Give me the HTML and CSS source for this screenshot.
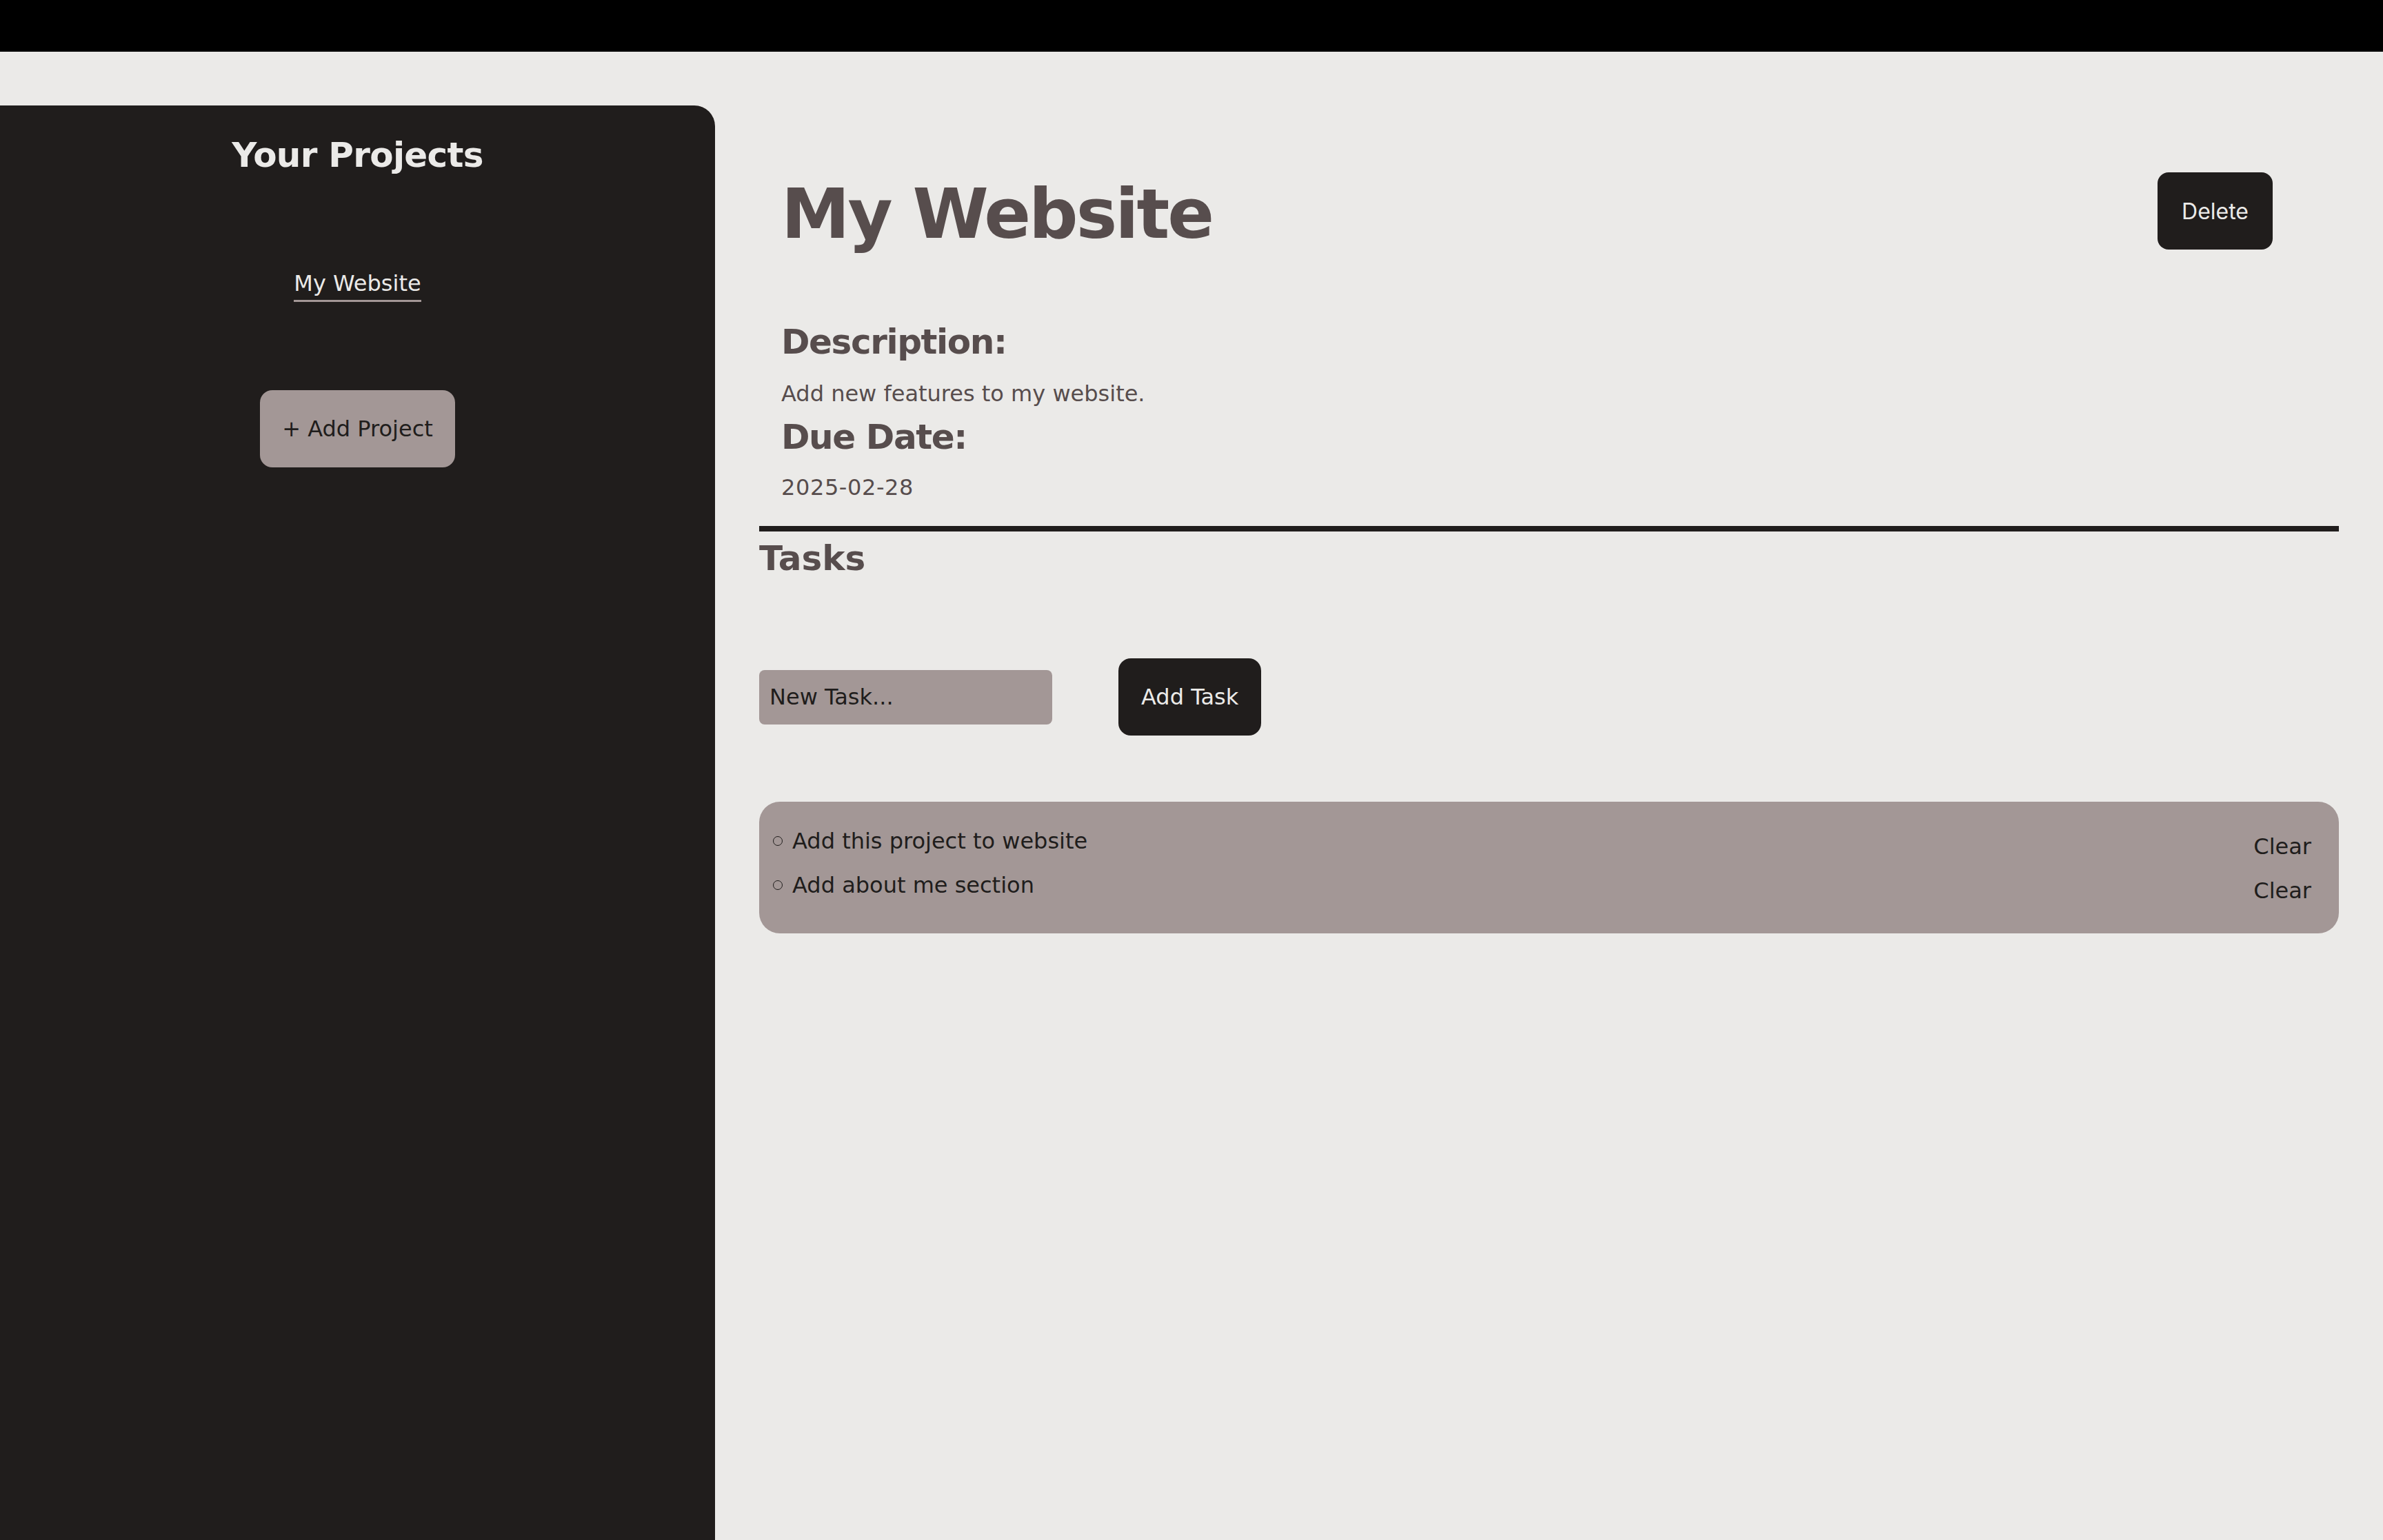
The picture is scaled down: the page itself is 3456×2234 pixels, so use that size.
FILE: index.html
```html
<!DOCTYPE html>
<html lang="en">
<head>
<meta charset="utf-8">
<title>Projects</title>
<link rel="stylesheet" href="styles.css">
</head>
<body>
<div class="topbar"></div>
<div class="app">
  <aside class="sidebar">
    <h2 class="sidebar-title">Your Projects</h2>
    <div class="project-list">
      <a class="project-link" href="#">My Website</a>
    </div>
    <div class="sidebar-actions">
      <button class="btn-add-project">+ Add Project</button>
    </div>
  </aside>
  <main class="main">
    <section class="details">
      <header class="details-header">
        <h1 class="project-title">My Website</h1>
        <button class="btn-delete">Delete</button>
      </header>
      <h2 class="label label-desc">Description:</h2>
      <p class="desc-text">Add new features to my website.</p>
      <h2 class="label label-due">Due Date:</h2>
      <p class="date-text">2025-02-28</p>
    </section>
    <div class="divider"></div>
    <h2 class="tasks-title">Tasks</h2>
    <div class="task-form">
      <input class="task-input" type="text" placeholder="New Task...">
      <button class="btn-add-task">Add Task</button>
    </div>
    <ul class="task-list">
      <li class="task-item"><span class="task-text">Add this project to website</span><button class="btn-clear">Clear</button></li>
      <li class="task-item"><span class="task-text">Add about me section</span><button class="btn-clear">Clear</button></li>
    </ul>
  </main>
</div>
</body>
</html>
```

FILE: styles.css
```css
* { box-sizing: border-box; }

html, body {
  margin: 0;
  padding: 0;
}

body {
  background: #ebeae8;
  font-family: "DejaVu Sans", Verdana, sans-serif;
  color: #574d4d;
  height: 2234px;
  overflow: hidden;
}

.topbar {
  height: 75px;
  background: #000;
}

.app {
  display: flex;
  padding-top: 78px;
  height: calc(2234px - 75px);
}

.sidebar {
  width: 1037px;
  flex: 0 0 1037px;
  background: #201d1c;
  border-top-right-radius: 30px;
  padding-top: 43px;
  text-align: center;
}

.sidebar-title {
  margin: 0;
  font-size: 50px;
  line-height: 58px;
  font-weight: bold;
  letter-spacing: -0.7px;
  color: #ebeae8;
}

.project-list {
  margin-top: 139px;
  font-size: 32px;
  line-height: 37px;
}

.project-link {
  color: #ebeae8;
  text-decoration: none;
  border-bottom: 3px solid #a39796;
  padding-bottom: 5px;
}

.sidebar-actions {
  margin-top: 136px;
  display: flex;
  justify-content: center;
}

.btn-add-project {
  height: 112px;
  padding: 0 32px;
  border: none;
  border-radius: 18px;
  background: #a39796;
  color: #201d1c;
  font-family: "DejaVu Sans", Verdana, sans-serif;
  font-size: 32px;
  line-height: 37px;
}

.main {
  flex: 1;
  padding: 100px 64px 0 64px;
}

.details {
  padding-left: 32px;
}

.details-header {
  display: flex;
  justify-content: space-between;
  align-items: flex-start;
  padding-right: 96px;
}

.project-title {
  margin: 0;
  font-size: 100px;
  line-height: 116px;
  font-weight: bold;
  letter-spacing: -3px;
  color: #574d4d;
}

.btn-delete {
  margin-top: -3px;
  height: 112px;
  padding: 0 35px;
  border: none;
  border-radius: 16px;
  background: #201d1c;
  color: #ebeae8;
  font-family: Inter, "Open Sans", sans-serif;
  font-size: 32px;
}

.label {
  margin: 0;
  font-size: 50px;
  line-height: 58px;
  font-weight: bold;
  letter-spacing: -1.4px;
  color: #574d4d;
}

.label-desc { margin-top: 98px; }
.label-due { margin-top: 15px; }

.desc-text, .date-text {
  margin: 0;
  font-size: 32px;
  line-height: 37px;
  color: #574d4d;
}

.desc-text { margin-top: 28px; }
.date-text { margin-top: 26px; letter-spacing: 0.6px; }

.divider {
  margin-top: 37px;
  height: 8px;
  background: #201d1c;
}

.tasks-title {
  margin: 10px 0 0 0;
  font-size: 50px;
  line-height: 58px;
  font-weight: bold;
  color: #574d4d;
}

.task-form {
  margin-top: 116px;
  display: flex;
  align-items: center;
  gap: 96px;
  height: 112px;
}

.task-input {
  width: 425px;
  height: 79px;
  border: none;
  border-radius: 8px;
  background: #a39796;
  padding: 0 15px;
  font-family: "DejaVu Sans", Verdana, sans-serif;
  font-size: 32px;
  color: #201d1c;
  outline: none;
}

.task-input::placeholder {
  color: #201d1c;
  opacity: 1;
}

.btn-add-task {
  height: 112px;
  padding: 0 33px;
  border: none;
  border-radius: 18px;
  background: #201d1c;
  color: #ebeae8;
  font-family: "DejaVu Sans", Verdana, sans-serif;
  font-size: 32px;
  line-height: 37px;
}

.task-list {
  list-style: none;
  margin: 96px 0 0 0;
  padding: 25px 40px 38px 20px;
  background: #a39796;
  border-radius: 30px;
}

.task-item {
  display: flex;
  align-items: center;
  justify-content: space-between;
  height: 64px;
  font-size: 32px;
  line-height: 37px;
  color: #201d1c;
}

.task-text {
  display: flex;
  align-items: center;
}

.task-text::before {
  content: "";
  width: 12px;
  height: 12px;
  border: 1.5px solid #201d1c;
  border-radius: 50%;
  margin-right: 14px;
  flex: 0 0 auto;
}

.btn-clear {
  padding: 16px 0 0 0;
  border: none;
  background: transparent;
  color: #201d1c;
  font-family: "DejaVu Sans", Verdana, sans-serif;
  font-size: 32px;
  line-height: 37px;
}
```
